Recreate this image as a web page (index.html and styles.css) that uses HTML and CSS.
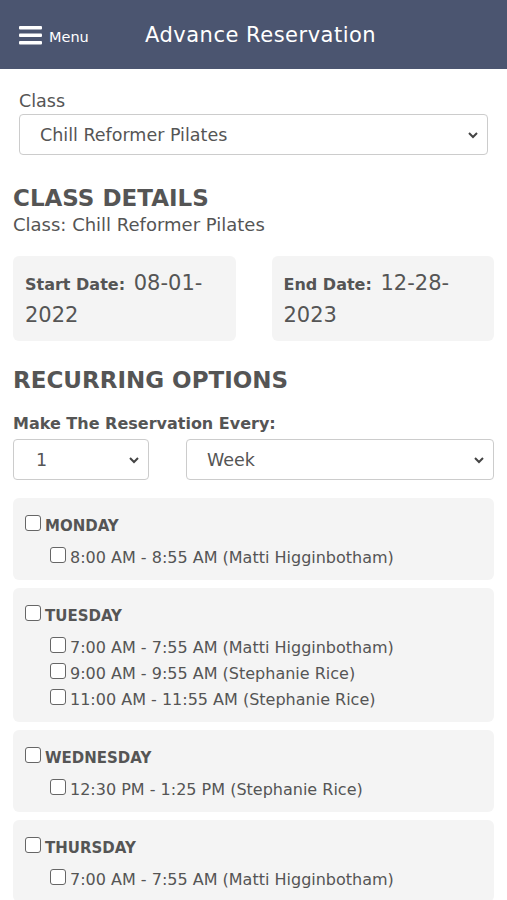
FILE: index.html
```html
<!DOCTYPE html>
<html lang="en">

<head>
  <meta charset="UTF-8">
  <meta name="viewport" content="width=device-width, initial-scale=1.0">
  <title>Advance Reservation</title>
  <link rel="stylesheet" href="styles.css">
</head>

<body>
  <header class="topbar">
    <div class="menu">
      <svg class="menu-icon" width="23" height="20" viewBox="0 0 23 20">
        <rect x="0" y="1" width="23" height="3.5" rx="1" fill="#fff" />
        <rect x="0" y="8.5" width="23" height="3.5" rx="1" fill="#fff" />
        <rect x="0" y="16" width="23" height="3.5" rx="1" fill="#fff" />
      </svg>
      <span>Menu</span>
    </div>
    <h1 class="title">Advance Reservation</h1>
  </header>

  <main class="page">
    <section class="class-pick">
      <label class="field-label">Class</label>
      <div class="select wide">
        <span>Chill Reformer Pilates</span>
        <svg width="12" height="8" viewBox="0 0 12 8"><path d="M2 2l4 4 4-4" fill="none" stroke="#444" stroke-width="2" /></svg>
      </div>
    </section>

    <h2 class="heading">CLASS DETAILS</h2>
    <div class="subline">Class: Chill Reformer Pilates</div>

    <div class="dates">
      <div class="date-card"><b>Start Date:</b> 08-01-2022</div>
      <div class="date-card"><b>End Date:</b> 12-28-2023</div>
    </div>

    <h2 class="heading recurring">RECURRING OPTIONS</h2>
    <div class="every-label">Make The Reservation Every:</div>
    <div class="every">
      <div class="select small">
        <span>1</span>
        <svg width="12" height="8" viewBox="0 0 12 8"><path d="M2 2l4 4 4-4" fill="none" stroke="#444" stroke-width="2" /></svg>
      </div>
      <div class="select grow">
        <span>Week</span>
        <svg width="12" height="8" viewBox="0 0 12 8"><path d="M2 2l4 4 4-4" fill="none" stroke="#444" stroke-width="2" /></svg>
      </div>
    </div>

    <div class="days">
      <div class="day">
        <label class="day-name"><input type="checkbox">MONDAY</label>
        <label class="slot"><input type="checkbox">8:00 AM - 8:55 AM (Matti Higginbotham)</label>
      </div>
      <div class="day">
        <label class="day-name"><input type="checkbox">TUESDAY</label>
        <label class="slot"><input type="checkbox">7:00 AM - 7:55 AM (Matti Higginbotham)</label>
        <label class="slot"><input type="checkbox">9:00 AM - 9:55 AM (Stephanie Rice)</label>
        <label class="slot"><input type="checkbox">11:00 AM - 11:55 AM (Stephanie Rice)</label>
      </div>
      <div class="day">
        <label class="day-name"><input type="checkbox">WEDNESDAY</label>
        <label class="slot"><input type="checkbox">12:30 PM - 1:25 PM (Stephanie Rice)</label>
      </div>
      <div class="day">
        <label class="day-name"><input type="checkbox">THURSDAY</label>
        <label class="slot"><input type="checkbox">7:00 AM - 7:55 AM (Matti Higginbotham)</label>
      </div>
    </div>
  </main>
</body>

</html>
```

FILE: styles.css
```css
body {
  margin: 0;
  font-family: "DejaVu Sans", "Open Sans", sans-serif;
  color: #555;
  background: #fff;
}

.topbar {
  height: 69px;
  background: #4b5570;
  display: flex;
  align-items: center;
  padding: 0 19px;
  color: #fff;
}

.menu {
  display: flex;
  align-items: center;
  gap: 7px;
  font-size: 14.5px;
  width: 126px;
}

.menu span {
  padding-top: 4px;
}

.title {
  margin: 0;
  font-size: 21px;
  font-weight: 400;
  letter-spacing: 0.5px;
}

.page {
  padding: 0 13px 20px;
}

.class-pick {
  padding: 21px 6px 0 6px;
}

.field-label {
  display: block;
  font-size: 17.5px;
  line-height: 22px;
  margin-bottom: 2px;
}

.select {
  box-sizing: border-box;
  height: 41px;
  border: 1px solid #ccc;
  border-radius: 4px;
  display: flex;
  align-items: center;
  justify-content: space-between;
  font-size: 17.5px;
  background: #fff;
  padding: 0 8px 0 20px;
}

.select.small {
  width: 136px;
  padding-left: 22px;
}

.select.grow {
  flex: 1;
}

.heading {
  margin: 28px 0 0;
  font-size: 23px;
  font-weight: 600;
  line-height: 30px;
  color: #555;
}

.subline {
  font-size: 18px;
  line-height: 24px;
}

.dates {
  display: flex;
  gap: 36px;
  margin-top: 19px;
}

.date-card {
  flex: 1;
  background: #f4f4f4;
  border-radius: 6px;
  padding: 12px 12px 13px;
  font-size: 21px;
  line-height: 31px;
  height: 85px;
  box-sizing: border-box;
}

.date-card b {
  font-size: 16px;
  font-weight: 600;
  margin-right: 2px;
}

.recurring {
  margin-top: 24px;
}

.every-label {
  margin-top: 18px;
  font-size: 16px;
  line-height: 22px;
  font-weight: 600;
}

.every {
  display: flex;
  gap: 37px;
  margin-top: 4px;
}

.days {
  display: flex;
  flex-direction: column;
  gap: 8px;
  margin-top: 18px;
}

.day {
  background: #f4f4f4;
  border-radius: 6px;
  padding: 17px 12px 9px;
}

.day-name,
.slot {
  display: flex;
  align-items: center;
  gap: 4px;
}

.day-name {
  font-size: 15px;
  line-height: 22px;
  font-weight: 600;
  margin-bottom: 8px;
}

.slot {
  font-size: 16px;
  margin-left: 25px;
  line-height: 26px;
}

input[type="checkbox"] {
  appearance: none;
  margin: 0;
  width: 16px;
  height: 16px;
  border: 1.5px solid #666;
  border-radius: 3px;
  background: #fff;
  position: relative;
  top: -3px;
}
```
